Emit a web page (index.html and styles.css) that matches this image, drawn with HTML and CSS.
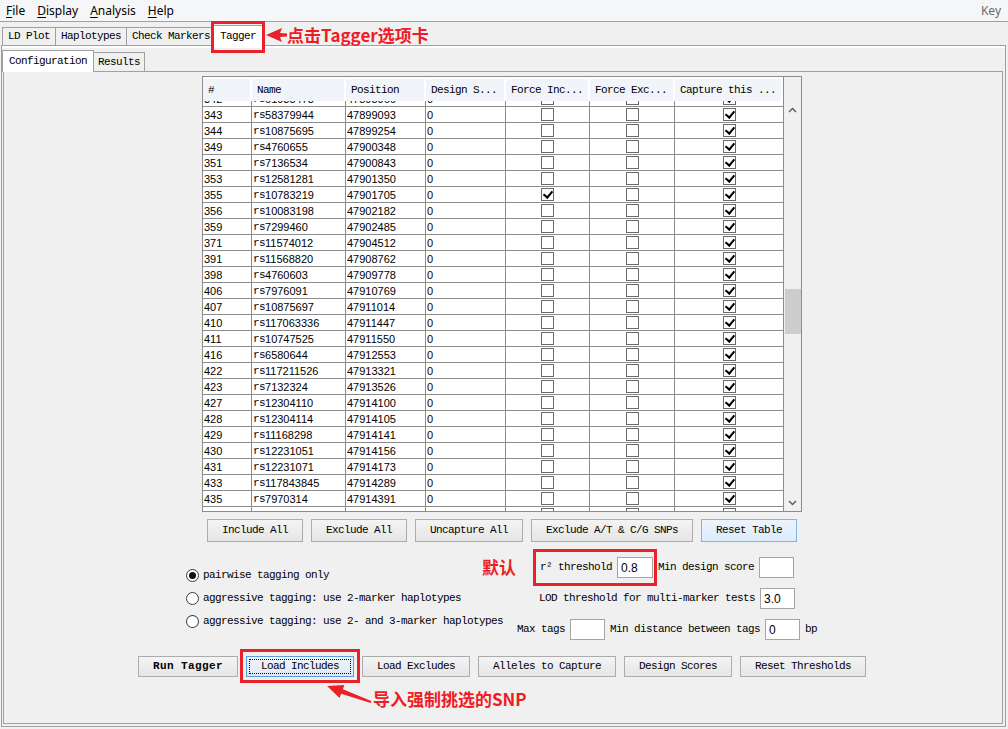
FILE: index.html
```html
<!DOCTYPE html>
<html>
<head>
<meta charset="utf-8">
<title>Haploview - Tagger</title>
<link rel="stylesheet" href="styles.css">
</head>
<body>
<div class="menubar">
  <span class="menu"><u>F</u>ile</span>
  <span class="menu"><u>D</u>isplay</span>
  <span class="menu"><u>A</u>nalysis</span>
  <span class="menu"><u>H</u>elp</span>
  <span class="key">Key</span>
</div>

<div class="tabrow">
  <div class="tab">LD Plot</div>
  <div class="tab">Haplotypes</div>
  <div class="tab">Check Markers</div>
  <div class="tab sel">Tagger
    <span class="redbox tabbox"></span>
    <span class="note tabnote">
      <svg width="21" height="16" viewBox="0 0 21 16"><polygon points="0,8 16,1 14,6 21,6.5 21,9.5 14,10 16,15" fill="#e8222a"/></svg>
      <span>点击Tagger选项卡</span>
    </span>
  </div>
</div>

<div class="pane">
  <div class="subrow">
    <div class="tab subtab sel">Configuration</div>
    <div class="tab subtab">Results</div>
  </div>
  <div class="inner">
    <div class="table">
      <div class="grid">
        <div class="thead">
          <span>#</span><span>Name</span><span>Position</span><span>Design S...</span><span>Force Inc...</span><span>Force Exc...</span><span>Capture this ...</span>
        </div>
        <div class="tbody">
          <div class="rows">
            <div class="row"><span>342</span><span><i>rs</i>61935473</span><span>47898966</span><span>0</span><span class="ck"><b></b></span><span class="ck"><b></b></span><span class="ck"><b class="on"></b></span></div>
            <div class="row"><span>343</span><span><i>rs</i>58379944</span><span>47899093</span><span>0</span><span class="ck"><b></b></span><span class="ck"><b></b></span><span class="ck"><b class="on"></b></span></div>
            <div class="row"><span>344</span><span><i>rs</i>10875695</span><span>47899254</span><span>0</span><span class="ck"><b></b></span><span class="ck"><b></b></span><span class="ck"><b class="on"></b></span></div>
            <div class="row"><span>349</span><span><i>rs</i>4760655</span><span>47900348</span><span>0</span><span class="ck"><b></b></span><span class="ck"><b></b></span><span class="ck"><b class="on"></b></span></div>
            <div class="row"><span>351</span><span><i>rs</i>7136534</span><span>47900843</span><span>0</span><span class="ck"><b></b></span><span class="ck"><b></b></span><span class="ck"><b class="on"></b></span></div>
            <div class="row"><span>353</span><span><i>rs</i>12581281</span><span>47901350</span><span>0</span><span class="ck"><b></b></span><span class="ck"><b></b></span><span class="ck"><b class="on"></b></span></div>
            <div class="row"><span>355</span><span><i>rs</i>10783219</span><span>47901705</span><span>0</span><span class="ck"><b class="on"></b></span><span class="ck"><b></b></span><span class="ck"><b class="on"></b></span></div>
            <div class="row"><span>356</span><span><i>rs</i>10083198</span><span>47902182</span><span>0</span><span class="ck"><b></b></span><span class="ck"><b></b></span><span class="ck"><b class="on"></b></span></div>
            <div class="row"><span>359</span><span><i>rs</i>7299460</span><span>47902485</span><span>0</span><span class="ck"><b></b></span><span class="ck"><b></b></span><span class="ck"><b class="on"></b></span></div>
            <div class="row"><span>371</span><span><i>rs</i>11574012</span><span>47904512</span><span>0</span><span class="ck"><b></b></span><span class="ck"><b></b></span><span class="ck"><b class="on"></b></span></div>
            <div class="row"><span>391</span><span><i>rs</i>11568820</span><span>47908762</span><span>0</span><span class="ck"><b></b></span><span class="ck"><b></b></span><span class="ck"><b class="on"></b></span></div>
            <div class="row"><span>398</span><span><i>rs</i>4760603</span><span>47909778</span><span>0</span><span class="ck"><b></b></span><span class="ck"><b></b></span><span class="ck"><b class="on"></b></span></div>
            <div class="row"><span>406</span><span><i>rs</i>7976091</span><span>47910769</span><span>0</span><span class="ck"><b></b></span><span class="ck"><b></b></span><span class="ck"><b class="on"></b></span></div>
            <div class="row"><span>407</span><span><i>rs</i>10875697</span><span>47911014</span><span>0</span><span class="ck"><b></b></span><span class="ck"><b></b></span><span class="ck"><b class="on"></b></span></div>
            <div class="row"><span>410</span><span><i>rs</i>117063336</span><span>47911447</span><span>0</span><span class="ck"><b></b></span><span class="ck"><b></b></span><span class="ck"><b class="on"></b></span></div>
            <div class="row"><span>411</span><span><i>rs</i>10747525</span><span>47911550</span><span>0</span><span class="ck"><b></b></span><span class="ck"><b></b></span><span class="ck"><b class="on"></b></span></div>
            <div class="row"><span>416</span><span><i>rs</i>6580644</span><span>47912553</span><span>0</span><span class="ck"><b></b></span><span class="ck"><b></b></span><span class="ck"><b class="on"></b></span></div>
            <div class="row"><span>422</span><span><i>rs</i>117211526</span><span>47913321</span><span>0</span><span class="ck"><b></b></span><span class="ck"><b></b></span><span class="ck"><b class="on"></b></span></div>
            <div class="row"><span>423</span><span><i>rs</i>7132324</span><span>47913526</span><span>0</span><span class="ck"><b></b></span><span class="ck"><b></b></span><span class="ck"><b class="on"></b></span></div>
            <div class="row"><span>427</span><span><i>rs</i>12304110</span><span>47914100</span><span>0</span><span class="ck"><b></b></span><span class="ck"><b></b></span><span class="ck"><b class="on"></b></span></div>
            <div class="row"><span>428</span><span><i>rs</i>12304114</span><span>47914105</span><span>0</span><span class="ck"><b></b></span><span class="ck"><b></b></span><span class="ck"><b class="on"></b></span></div>
            <div class="row"><span>429</span><span><i>rs</i>11168298</span><span>47914141</span><span>0</span><span class="ck"><b></b></span><span class="ck"><b></b></span><span class="ck"><b class="on"></b></span></div>
            <div class="row"><span>430</span><span><i>rs</i>12231051</span><span>47914156</span><span>0</span><span class="ck"><b></b></span><span class="ck"><b></b></span><span class="ck"><b class="on"></b></span></div>
            <div class="row"><span>431</span><span><i>rs</i>12231071</span><span>47914173</span><span>0</span><span class="ck"><b></b></span><span class="ck"><b></b></span><span class="ck"><b class="on"></b></span></div>
            <div class="row"><span>433</span><span><i>rs</i>117843845</span><span>47914289</span><span>0</span><span class="ck"><b></b></span><span class="ck"><b></b></span><span class="ck"><b class="on"></b></span></div>
            <div class="row"><span>435</span><span><i>rs</i>7970314</span><span>47914391</span><span>0</span><span class="ck"><b></b></span><span class="ck"><b></b></span><span class="ck"><b class="on"></b></span></div>
            <div class="row"><span>436</span><span><i>rs</i>4760473</span><span>47914504</span><span>0</span><span class="ck"><b></b></span><span class="ck"><b></b></span><span class="ck"><b class="on"></b></span></div>
          </div>
        </div>
      </div>
      <div class="vs">
        <div class="corner"></div>
        <div class="arrow"><svg width="9" height="6" viewBox="0 0 9 6"><path d="M1 5 L4.5 1.5 L8 5" fill="none" stroke="#606060" stroke-width="1.5"/></svg></div>
        <div class="track"><div class="thumb"></div></div>
        <div class="arrow"><svg width="9" height="6" viewBox="0 0 9 6"><path d="M1 1 L4.5 4.5 L8 1" fill="none" stroke="#606060" stroke-width="1.5"/></svg></div>
      </div>
    </div>

    <div class="btnrow">
      <button class="btn">Include All</button>
      <button class="btn">Exclude All</button>
      <button class="btn">Uncapture All</button>
      <button class="btn">Exclude A/T &amp; C/G SNPs</button>
      <button class="btn hot">Reset Table</button>
    </div>

    <div class="options">
      <div class="radios">
        <div class="radio"><span class="dot on"></span>pairwise tagging only</div>
        <div class="radio"><span class="dot"></span>aggressive tagging: use 2-marker haplotypes</div>
        <div class="radio"><span class="dot"></span>aggressive tagging: use 2- and 3-marker haplotypes</div>
      </div>
      <div class="fields">
        <div class="frow">
          <div class="hl">
            <span>r² threshold</span><span class="inp w36">0.8</span>
            <span class="redbox hlbox"></span>
            <span class="note hlnote">默认</span>
          </div>
          <span>Min design score</span><span class="inp"></span>
        </div>
        <div class="frow">
          <span>LOD threshold for multi-marker tests</span><span class="inp">3.0</span>
        </div>
        <div class="frow">
          <span>Max tags</span><span class="inp"></span>
          <span>Min distance between tags</span><span class="inp">0</span>
          <span>bp</span>
        </div>
      </div>
    </div>

    <div class="actions">
      <button class="btn sm bold">Run Tagger</button>
      <button class="btn sm focus">Load Includes
        <span class="redbox fbox"></span>
        <svg class="barrow" width="46" height="22" viewBox="0 0 46 22"><polygon points="0,4 17.4,2.9 15.9,7.15 44.3,19.1 43.7,20.9 14.1,11.85 12.6,16.1" fill="#e8222a"/></svg>
        <span class="note fnote">导入强制挑选的SNP</span>
      </button>
      <button class="btn sm">Load Excludes</button>
      <button class="btn sm">Alleles to Capture</button>
      <button class="btn sm">Design Scores</button>
      <button class="btn sm">Reset Thresholds</button>
    </div>
  </div>
</div>
</body>
</html>
```

FILE: styles.css
```css
* { box-sizing: border-box; }
html, body { margin: 0; padding: 0; }
body {
  width: 1008px;
  height: 729px;
  overflow: hidden;
  background: #f0f0f0;
  color: #000;
  font-family: "Liberation Mono", monospace;
  font-size: 11px;
  line-height: 1;
  letter-spacing: -0.6px;
  display: flex;
  flex-direction: column;
}

/* menu bar */
.menubar {
  height: 22px;
  flex: none;
  background: #f5f6f7;
  border-bottom: 1px solid #a0a0a0;
  display: flex;
  align-items: center;
  font-family: "Noto Sans", sans-serif;
  font-size: 12px;
  letter-spacing: 0;
  color: #000;
}
.menu { padding: 0 6px; }
.menu u { text-decoration-thickness: 1px; text-underline-offset: 2px; }
.key { margin-left: auto; padding-right: 7px; color: #6b6b6b; }

/* tabs */
.tabrow {
  height: 23px;
  flex: none;
  display: flex;
  align-items: flex-end;
  padding-left: 2px;
}
.tab {
  height: 18px;
  padding: 0 5px;
  border: 1px solid #a0a0a0;
  border-bottom: 0;
  margin-right: -1px;
  background: #f0f0f0;
  display: flex;
  align-items: center;
  white-space: nowrap;
}
.tab.sel {
  height: 21px;
  margin: 0 -1px -1px -4px;
  padding: 0 8px;
  background: #fff;
  position: relative;
  z-index: 1;
}

.pane {
  margin-left: 1px;
  width: 1005px;
  height: 682px;
  flex: none;
  border: 1px solid #a0a0a0;
  box-shadow: inset 0 2px 0 #fff;
  padding: 2px 2px 2px 1px;
  display: flex;
  flex-direction: column;
}
.subrow {
  height: 23px;
  flex: none;
  display: flex;
  align-items: flex-end;
  padding-left: 1px;
}
.subtab { height: 19px; padding: 0 4px; }
.subtab.sel { height: 22px; margin: 0 -1px -1px -2px; padding: 0 6px; }

.inner {
  flex: 1;
  border: 1px solid #a0a0a0;
  padding: 4px 2px 0 0;
  display: flex;
  flex-direction: column;
  align-items: center;
}

/* table */
.table {
  width: 600px;
  height: 436px;
  flex: none;
  border: 1px solid #8c8c8c;
  background: #fff;
  display: flex;
}
.grid { width: 580px; display: flex; flex-direction: column; }
.thead, .row {
  display: grid;
  grid-template-columns: 49px 94px 80px 80px 84px 85px 108px;
}
.thead {
  height: 24px;
  flex: none;
  background: #fff;
  padding-top: 2px;
}
.thead span {
  background: #f1f4f9;
  border-right: 2px solid #fff;
  padding-left: 5px;
  display: flex;
  align-items: center;
  white-space: nowrap;
  overflow: hidden;
}
.tbody { height: 410px; overflow: hidden; }
.rows { margin-top: -10px; }
.row {
  height: 16px;
  border-bottom: 1px solid #8c8c8c;
}
.row span {
  border-right: 1px solid #8c8c8c;
  padding-left: 1px;
  padding-top: 1px;
  display: flex;
  align-items: center;
  font-family: "Liberation Sans", sans-serif;
  font-size: 11px;
  letter-spacing: 0;
  white-space: nowrap;
  overflow: hidden;
}
.row span:last-child { border-right: 0; }
.row i {
  font-style: normal;
  font-family: "Liberation Mono", monospace;
  letter-spacing: -0.6px;
}
.row .ck { justify-content: center; padding: 0; }
.ck b {
  width: 13px;
  height: 13px;
  border: 1px solid #6a6a6a;
  background: #fff;
  position: relative;
}
.ck b.on::after {
  content: "";
  position: absolute;
  left: 3px;
  top: 0;
  width: 4px;
  height: 7px;
  border: solid #000;
  border-width: 0 2px 2px 0;
  transform: rotate(40deg);
}

.vs {
  flex: 1;
  border-left: 1px solid #8c8c8c;
  background: #f0f0f0;
  display: flex;
  flex-direction: column;
}
.corner { height: 24px; flex: none; }
.arrow { height: 17px; flex: none; display: flex; align-items: center; justify-content: center; }
.track { flex: 1; }
.thumb { margin: 171px 0 0 1px; width: 16px; height: 45px; background: #cdcdcd; }

/* buttons */
.btn {
  height: 23px;
  padding: 0 14px;
  border: 1px solid #acacac;
  border-radius: 0;
  background: linear-gradient(#f4f4f4, #e5e5e5);
  font: inherit;
  letter-spacing: inherit;
  color: #000;
  display: flex;
  align-items: center;
  white-space: nowrap;
}
.btn.hot { border-color: #7eb4ea; background: linear-gradient(#ecf4fc, #dcecfc); }
.btn.sm { height: 21px; }
.btn.bold { font-weight: bold; letter-spacing: 0.4px; }
.btn.focus {
  position: relative;
  border-color: #5a9ee2;
  background: linear-gradient(#eef4fa, #e0eaf4);
  outline: 1px dotted #000;
  outline-offset: -4px;
}
.btnrow { display: flex; gap: 8px; margin-top: 7px; flex: none; }

/* options */
.options {
  align-self: stretch;
  height: 83px;
  margin-top: 15px;
  padding-left: 11px;
  display: flex;
  justify-content: center;
  align-items: center;
  flex: none;
}
.radios { width: 319px; display: flex; flex-direction: column; }
.radio { height: 23px; display: flex; align-items: center; white-space: nowrap; }
.dot {
  width: 13px;
  height: 13px;
  border-radius: 50%;
  border: 1px solid #3c3c3c;
  background: #fff;
  margin: 0 4px 0 2px;
  display: flex;
  align-items: center;
  justify-content: center;
}
.dot.on::after { content: ""; width: 7px; height: 7px; border-radius: 50%; background: #111; }

.fields { width: 328px; display: flex; flex-direction: column; align-items: center; gap: 10px; }
.frow { height: 21px; display: flex; align-items: center; gap: 5px; white-space: nowrap; }
.inp {
  width: 35px;
  height: 21px;
  border: 1px solid #a5a5a5;
  background: #fff;
  padding-left: 3px;
  display: flex;
  align-items: center;
  font-family: "Liberation Sans", sans-serif;
  font-size: 12px;
  letter-spacing: 0;
}
.inp.w36 { width: 36px; }
.hl { position: relative; display: flex; align-items: center; gap: 5px; }

.actions { display: flex; gap: 8px; margin-top: 16px; flex: none; }

/* annotations */
.redbox { position: absolute; border: 3px solid #e8222a; pointer-events: none; }
.tabbox { left: -1px; right: -1px; top: -5px; bottom: -7px; }
.hlbox { left: -7px; right: -4px; top: -8px; bottom: -8px; }
.fbox { left: -7px; right: -7px; top: -8px; bottom: -7px; }
.note {
  position: absolute;
  color: #ee1d25;
  font-family: "Noto Sans CJK SC", sans-serif;
  font-weight: bold;
  font-size: 17px;
  line-height: 22px;
  letter-spacing: 0;
  white-space: nowrap;
}
.tabnote { left: calc(100% + 2px); top: -2px; display: flex; align-items: center; }
.hlnote { left: -58px; top: -1px; }
.barrow { position: absolute; left: 80px; top: 25px; }
.fnote { left: 126px; top: 31px; }
```
